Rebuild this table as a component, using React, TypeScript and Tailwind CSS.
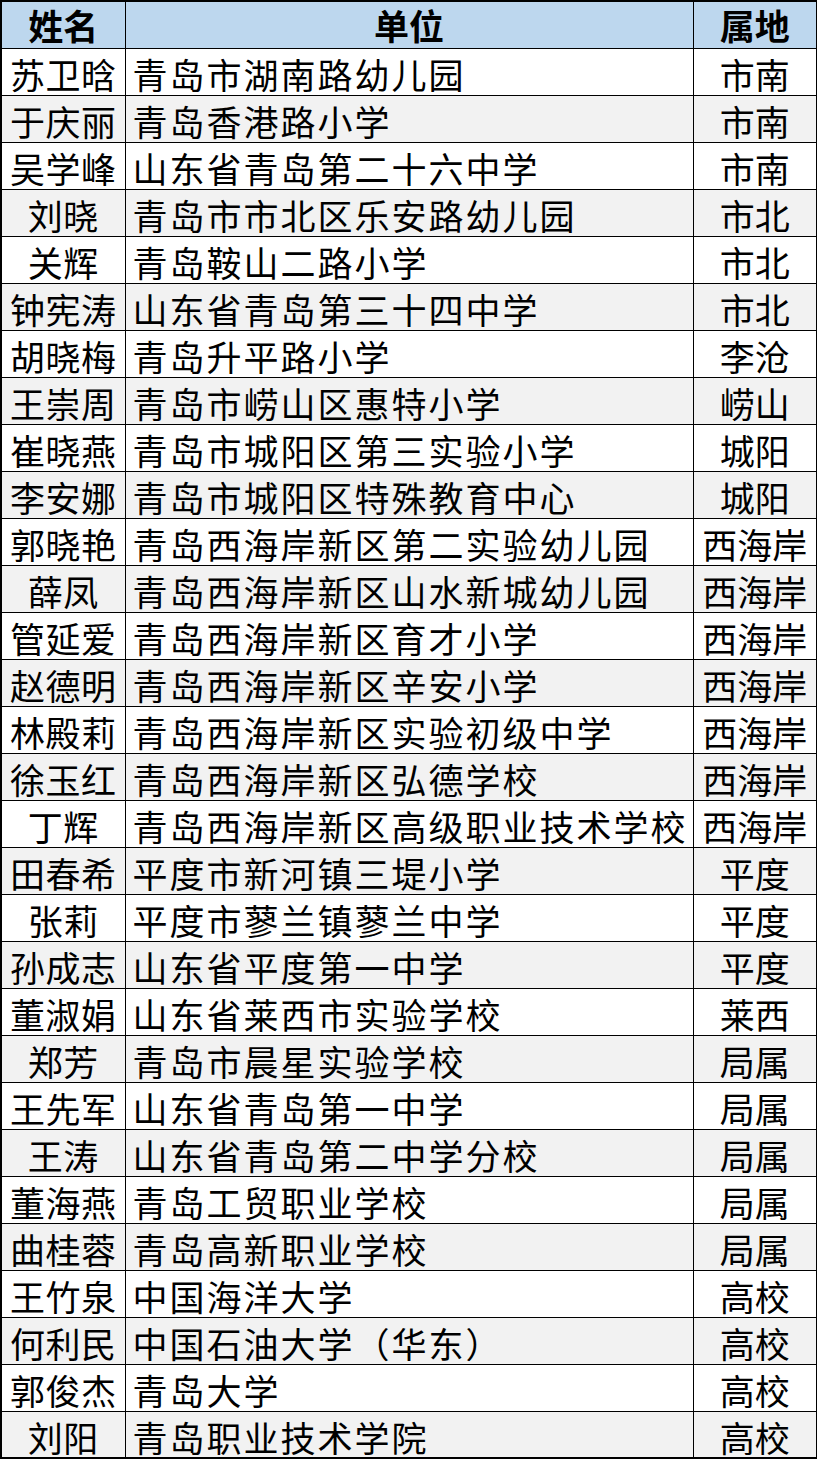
const rows: [string, string, string][] = [
  ["苏卫晗", "青岛市湖南路幼儿园", "市南"],
  ["于庆丽", "青岛香港路小学", "市南"],
  ["吴学峰", "山东省青岛第二十六中学", "市南"],
  ["刘晓", "青岛市市北区乐安路幼儿园", "市北"],
  ["关辉", "青岛鞍山二路小学", "市北"],
  ["钟宪涛", "山东省青岛第三十四中学", "市北"],
  ["胡晓梅", "青岛升平路小学", "李沧"],
  ["王崇周", "青岛市崂山区惠特小学", "崂山"],
  ["崔晓燕", "青岛市城阳区第三实验小学", "城阳"],
  ["李安娜", "青岛市城阳区特殊教育中心", "城阳"],
  ["郭晓艳", "青岛西海岸新区第二实验幼儿园", "西海岸"],
  ["薛凤", "青岛西海岸新区山水新城幼儿园", "西海岸"],
  ["管延爱", "青岛西海岸新区育才小学", "西海岸"],
  ["赵德明", "青岛西海岸新区辛安小学", "西海岸"],
  ["林殿莉", "青岛西海岸新区实验初级中学", "西海岸"],
  ["徐玉红", "青岛西海岸新区弘德学校", "西海岸"],
  ["丁辉", "青岛西海岸新区高级职业技术学校", "西海岸"],
  ["田春希", "平度市新河镇三堤小学", "平度"],
  ["张莉", "平度市蓼兰镇蓼兰中学", "平度"],
  ["孙成志", "山东省平度第一中学", "平度"],
  ["董淑娟", "山东省莱西市实验学校", "莱西"],
  ["郑芳", "青岛市晨星实验学校", "局属"],
  ["王先军", "山东省青岛第一中学", "局属"],
  ["王涛", "山东省青岛第二中学分校", "局属"],
  ["董海燕", "青岛工贸职业学校", "局属"],
  ["曲桂蓉", "青岛高新职业学校", "局属"],
  ["王竹泉", "中国海洋大学", "高校"],
  ["何利民", "中国石油大学（华东）", "高校"],
  ["郭俊杰", "青岛大学", "高校"],
  ["刘阳", "青岛职业技术学院", "高校"],
];

const font = { fontFamily: '"Noto Sans CJK SC", sans-serif' };

export default function App() {
  return (
    <div className="w-[817px] bg-white" style={font}>
      <table className="w-[816px] table-fixed border-collapse border-2 border-black text-[35px] leading-none text-black">
        <colgroup>
          <col className="w-[124px]" />
          <col className="w-[568px]" />
          <col className="w-[124px]" />
        </colgroup>
        <thead>
          <tr className="h-[47px] bg-[#bdd7ee]">
            <th className="border border-black text-center font-semibold">姓名</th>
            <th className="border border-black text-center font-semibold">单位</th>
            <th className="border border-black text-center font-semibold">属地</th>
          </tr>
        </thead>
        <tbody>
          {rows.map(([name, unit, area], i) => (
            <tr key={name} className={`h-[47px] ${i % 2 === 1 ? "bg-[#f2f2f2]" : "bg-white"}`}>
              <td className="border border-black text-center whitespace-nowrap tracking-[0.5px] pt-[4px]">{name}</td>
              <td className="border border-black pl-[7px] whitespace-nowrap tracking-[2px] pt-[4px]">{unit}</td>
              <td className="border border-black text-center whitespace-nowrap pt-[4px]">{area}</td>
            </tr>
          ))}
        </tbody>
      </table>
    </div>
  );
}
